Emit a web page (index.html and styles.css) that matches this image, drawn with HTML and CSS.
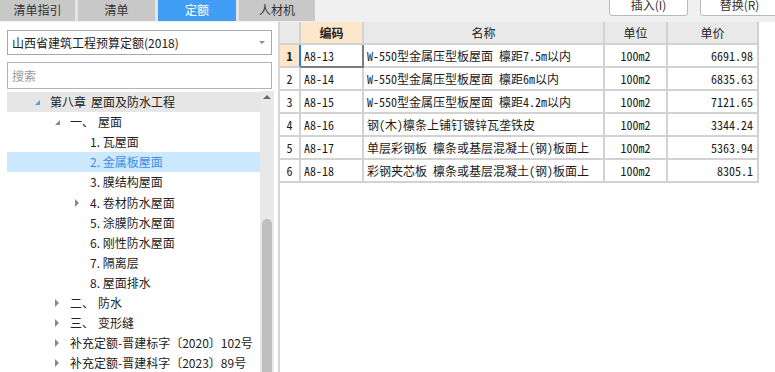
FILE: index.html
```html
<!DOCTYPE html>
<html>
<head>
    <title>定额</title>
    <link rel="stylesheet" href="styles.css">
</head>
<body>
    <div class="app">
        <div class="topbar">
            <div class="tabs">
                <div class="tab t1">清单指引</div>
                <div class="tab t2">清单</div>
                <div class="tab t3 active">定额</div>
                <div class="tab t4">人材机</div>
            </div>
            <div class="actions">
                <button class="btn">插入(I)</button>
                <button class="btn last">替换(R)</button>
            </div>
        </div>

        <div class="main">
            <div class="sidebar">
                <div class="select">
                    <span>山西省建筑工程预算定额(2018)</span>
                    <i class="caret"></i>
                </div>
                <input class="search" type="text" placeholder="搜索">

                <div class="tree">
                    <div class="tree-list">
                        <div class="row lv0 hover"><i class="tw open blue"></i>第八章<span class="sp">屋面及防水工程</span></div>
                        <div class="row lv1"><i class="tw open"></i>一、<span class="sp">屋面</span></div>
                        <div class="row lv2"><i class="tw"></i>1. 瓦屋面</div>
                        <div class="row lv2 selected"><i class="tw"></i>2. 金属板屋面</div>
                        <div class="row lv2"><i class="tw"></i>3. 膜结构屋面</div>
                        <div class="row lv2"><i class="tw closed"></i>4. 卷材防水屋面</div>
                        <div class="row lv2"><i class="tw"></i>5. 涂膜防水屋面</div>
                        <div class="row lv2"><i class="tw"></i>6. 刚性防水屋面</div>
                        <div class="row lv2"><i class="tw"></i>7. 隔离层</div>
                        <div class="row lv2"><i class="tw"></i>8. 屋面排水</div>
                        <div class="row lv1"><i class="tw closed"></i>二、<span class="sp">防水</span></div>
                        <div class="row lv1"><i class="tw closed"></i>三、<span class="sp">变形缝</span></div>
                        <div class="row lv1"><i class="tw closed"></i>补充定额-晋建标字〔2020〕102号</div>
                        <div class="row lv1"><i class="tw closed"></i>补充定额-晋建科字〔2023〕89号</div>
                    </div>
                    <div class="scrollbar">
                        <i class="sb-up"></i>
                        <div class="sb-thumb"></div>
                    </div>
                </div>
            </div>

            <div class="content">
                <table class="grid">
                    <colgroup>
                        <col style="width:21px">
                        <col style="width:63px">
                        <col style="width:241px">
                        <col style="width:63px">
                        <col style="width:91px">
                    </colgroup>
                    <thead>
                        <tr>
                            <th></th>
                            <th class="key">编码</th>
                            <th>名称</th>
                            <th>单位</th>
                            <th>单价</th>
                        </tr>
                    </thead>
                    <tbody>
                        <tr>
                            <td class="num cur-row">1</td>
                            <td class="code cur">A8-13</td>
                            <td class="name">W-550型金属压型板屋面 檩距7.5m以内</td>
                            <td class="unit">100m2</td>
                            <td class="price">6691.98</td>
                        </tr>
                        <tr>
                            <td class="num">2</td>
                            <td class="code">A8-14</td>
                            <td class="name">W-550型金属压型板屋面 檩距6m以内</td>
                            <td class="unit">100m2</td>
                            <td class="price">6835.63</td>
                        </tr>
                        <tr>
                            <td class="num">3</td>
                            <td class="code">A8-15</td>
                            <td class="name">W-550型金属压型板屋面 檩距4.2m以内</td>
                            <td class="unit">100m2</td>
                            <td class="price">7121.65</td>
                        </tr>
                        <tr>
                            <td class="num">4</td>
                            <td class="code">A8-16</td>
                            <td class="name">钢(木)檩条上铺钉镀锌瓦垄铁皮</td>
                            <td class="unit">100m2</td>
                            <td class="price">3344.24</td>
                        </tr>
                        <tr>
                            <td class="num">5</td>
                            <td class="code">A8-17</td>
                            <td class="name">单层彩钢板 檩条或基层混凝土(钢)板面上</td>
                            <td class="unit">100m2</td>
                            <td class="price">5363.94</td>
                        </tr>
                        <tr>
                            <td class="num">6</td>
                            <td class="code">A8-18</td>
                            <td class="name">彩钢夹芯板 檩条或基层混凝土(钢)板面上</td>
                            <td class="unit">100m2</td>
                            <td class="price">8305.1</td>
                        </tr>
                    </tbody>
                </table>
            </div>
        </div>
    </div>
</body>
</html>
```

FILE: styles.css
```css
html, body {
    margin: 0;
    padding: 0;
}

body {
    width: 775px;
    height: 372px;
    overflow: hidden;
    font-family: "Noto Sans CJK SC", "Microsoft YaHei", sans-serif;
    font-size: 12px;
    color: #222222;
    background-color: #ffffff;
}

.app {
    display: flex;
    flex-direction: column;
    height: 372px;
}

/* barra de abas */
.topbar {
    display: flex;
    height: 22px;
    background-color: #f0f0f0;
    overflow: hidden;
    flex-shrink: 0;
}

.tabs {
    display: flex;
    gap: 3px;
    height: 21px;
    background-color: #e4e4e4;
}

.tab {
    height: 21px;
    line-height: 20px;
    text-align: center;
    background-color: #c8c8c8;
    color: #333333;
    font-size: 12px;
}

.t1 { width: 75px; }
.t2 { width: 77px; }
.t3 { width: 78px; }
.t4 { width: 76px; }

.tab.active {
    background-color: #409ff5;
    color: #ffffff;
}

.actions {
    display: flex;
    gap: 12px;
    margin-left: auto;
    align-items: flex-start;
}

.btn {
    width: 79px;
    height: 23px;
    margin-top: -7px;
    padding: 0;
    line-height: 21px;
    font-family: inherit;
    font-size: 12px;
    color: #333333;
    background-color: #ffffff;
    border: 1px solid #b9b9b9;
    border-radius: 3px;
}

.btn.last {
    margin-right: -4px;
}

.main {
    display: flex;
    flex: 1;
    min-height: 0;
}

/* painel esquerdo */
.sidebar {
    width: 280px;
    box-sizing: border-box;
    padding: 8px 0 0 7px;
    border-right: 2px solid #d6d6d6;
    display: flex;
    flex-direction: column;
    flex-shrink: 0;
}

.select {
    width: 265px;
    height: 25px;
    box-sizing: border-box;
    border: 1px solid #a8a8a8;
    display: flex;
    align-items: center;
    padding: 0 5px 0 4px;
}

.select span {
    flex: 1;
}

.caret {
    width: 0;
    height: 0;
    border-left: 3px solid transparent;
    border-right: 3px solid transparent;
    border-top: 3px solid #8c8c8c;
    margin-right: 1px;
}

.search {
    width: 265px;
    height: 27px;
    box-sizing: border-box;
    margin: 7px 0 2px 0;
    border: 1px solid #b4b4b4;
    padding: 0 4px;
    font-family: inherit;
    font-size: 12px;
    outline: none;
}

.search::placeholder {
    color: #9a9a9a;
}

.tree {
    display: flex;
    width: 267px;
    flex: 1;
    min-height: 0;
}

.tree-list {
    flex: 1;
    padding-top: 1px;
}

.row {
    height: 20.1px;
    line-height: 20px;
    display: flex;
    align-items: center;
    white-space: nowrap;
}

.row.hover {
    background-color: #e6e6e6;
}

.row.selected {
    background-color: #cce8ff;
    color: #3b8ee4;
}

.lv0 { padding-left: 27px; }
.lv1 { padding-left: 47px; }
.lv2 { padding-left: 67px; }

.tw {
    width: 16px;
    height: 20px;
    flex-shrink: 0;
    position: relative;
}

.tw.open::after {
    content: "";
    position: absolute;
    left: 1px;
    top: 8px;
    border-left: 5px solid transparent;
    border-bottom: 5px solid #8a8a8a;
}

.tw.open.blue::after {
    border-bottom-color: #5b9ad6;
}

.tw.closed::after {
    content: "";
    position: absolute;
    left: 1px;
    top: 6px;
    border-left: 4px solid #8a8a8a;
    border-top: 4px solid transparent;
    border-bottom: 4px solid transparent;
}

.sp {
    margin-left: 5px;
}

.lv1 .sp {
    margin-left: 4px;
}

.scrollbar {
    width: 14px;
    background-color: #e8e8e8;
    display: flex;
    flex-direction: column;
    align-items: center;
}

.sb-up {
    margin-top: 4px;
    width: 0;
    height: 0;
    border-left: 4px solid transparent;
    border-right: 4px solid transparent;
    border-bottom: 4px solid #6a6a6a;
}

.sb-thumb {
    width: 10px;
    flex: 1;
    margin-top: 120px;
    background-color: #bfbfbf;
    border-radius: 5px 5px 0 0;
}

/* tabela */
.content {
    flex: 1;
    background-color: #ffffff;
}

.grid {
    table-layout: fixed;
    width: 479px;
    border-collapse: separate;
    border-spacing: 0;
}

.grid th, .grid td {
    height: 21px;
    padding: 0 3px;
    border-right: 2px solid #d2d2d2;
    border-bottom: 2px solid #d2d2d2;
    white-space: nowrap;
    overflow: hidden;
}

.grid th {
    background-color: #e9e9e9;
    font-weight: normal;
    text-align: center;
    color: #222222;
}

.grid th.key {
    background-color: #fde6c9;
    font-weight: bold;
}

.grid td {
    font-family: "Noto Sans Mono CJK SC", "Liberation Mono", monospace;
    font-size: 12px;
    color: #1a1a1a;
}

.grid td.num {
    text-align: center;
    padding: 0;
}

.grid td.cur-row {
    background-color: #fde6c9;
    font-weight: bold;
    border-right-color: #2b7de9;
}

.grid td.cur {
    border-right-color: #7c7c7c;
    border-bottom-color: #7c7c7c;
}

.grid td.unit {
    text-align: center;
}

.grid td.price {
    text-align: right;
    padding-right: 4px;
}
```
